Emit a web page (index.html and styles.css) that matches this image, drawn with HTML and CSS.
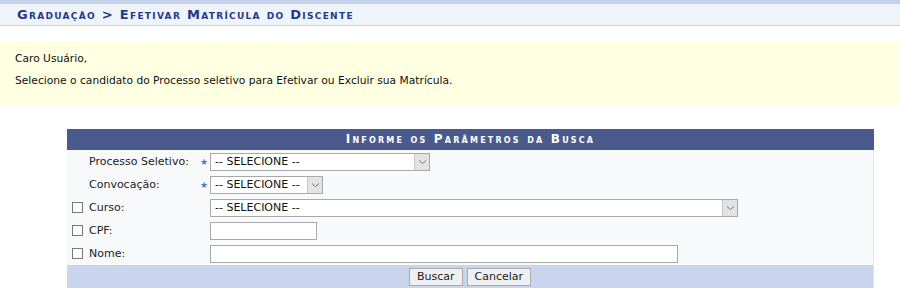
FILE: index.html
```html
<!DOCTYPE html>
<html lang="pt-BR">
<head>
<meta charset="utf-8">
<title>Efetivar Matrícula do Discente</title>
<link rel="stylesheet" href="styles.css">
</head>
<body>
<div class="topline"></div>
<h2 class="title">Graduação &gt; Efetivar Matrícula do Discente</h2>
<div class="info">
  <p>Caro Usuário,</p>
  <p>Selecione o candidato do Processo seletivo para Efetivar ou Excluir sua Matrícula.</p>
</div>
<form class="busca">
  <table class="formulario">
    <caption>Informe os Parâmetros da Busca</caption>
    <tbody>
      <tr>
        <td class="chk"></td>
        <th>Processo Seletivo:</th>
        <td class="req"><span class="star">★</span></td>
        <td><span class="sel w220"><span class="txt">-- SELECIONE --</span><span class="arrow"><svg width="9" height="6" viewBox="0 0 9 6"><path d="M1 1.5 L4.5 4.5 L8 1.5" fill="none" stroke="#777" stroke-width="1"/></svg></span></span></td>
      </tr>
      <tr>
        <td class="chk"></td>
        <th>Convocação:</th>
        <td class="req"><span class="star">★</span></td>
        <td><span class="sel w113"><span class="txt">-- SELECIONE --</span><span class="arrow"><svg width="9" height="6" viewBox="0 0 9 6"><path d="M1 1.5 L4.5 4.5 L8 1.5" fill="none" stroke="#777" stroke-width="1"/></svg></span></span></td>
      </tr>
      <tr>
        <td class="chk"><span class="box"></span></td>
        <th>Curso:</th>
        <td class="req"></td>
        <td><span class="sel w528"><span class="txt">-- SELECIONE --</span><span class="arrow"><svg width="9" height="6" viewBox="0 0 9 6"><path d="M1 1.5 L4.5 4.5 L8 1.5" fill="none" stroke="#777" stroke-width="1"/></svg></span></span></td>
      </tr>
      <tr>
        <td class="chk"><span class="box"></span></td>
        <th>CPF:</th>
        <td class="req"></td>
        <td><span class="inp w107"></span></td>
      </tr>
      <tr>
        <td class="chk"><span class="box"></span></td>
        <th>Nome:</th>
        <td class="req"></td>
        <td><span class="inp w468"></span></td>
      </tr>
    </tbody>
    <tfoot>
      <tr>
        <td colspan="4"><span class="btn">Buscar</span><span class="btn">Cancelar</span></td>
      </tr>
    </tfoot>
  </table>
</form>
</body>
</html>
```
FILE: styles.css
```css
* { box-sizing: border-box; }
body {
  margin: 0;
  font-family: "DejaVu Sans", Verdana, sans-serif;
  font-size: 11px;
  color: #222;
  background: #fff;
}
.topline {
  height: 4px;
  background: #c4d2eb;
}
.title {
  margin: 0;
  height: 22px;
  padding: 3px 0 0 17px;
  background: #eff3fa;
  border-bottom: 1px solid #c4d2eb;
  color: #1f3a8a;
  font-size: 13px;
  letter-spacing: 1.3px;
  font-weight: bold;
  font-variant: small-caps;
  line-height: 16px;
}
.info {
  margin-top: 15px;
  background: #ffffe1;
  padding: 7px 15px 13px;
  color: #111;
}
.info p {
  margin: 0;
  font-size: 10.7px;
  line-height: 22px;
}
.busca {
  margin: 24px 0 0 67px;
  width: 807px;
}
.formulario {
  width: 807px;
  border-collapse: collapse;
  background: #f8f9fb;
  border-right: 1px solid #e3e6ec;
}
.formulario caption {
  background: #4b5a8c;
  color: #fff;
  font-weight: bold;
  font-variant: small-caps;
  letter-spacing: 2.2px;
  font-size: 12px;
  height: 21px;
  line-height: 21px;
  text-align: center;
}
.formulario td, .formulario th {
  padding: 0;
  height: 23px;
  vertical-align: middle;
}
.formulario th {
  text-align: left;
  font-weight: normal;
  width: 111px;
}
.chk { width: 22px; padding-left: 5px !important; }
.req { width: 10px; }
.box {
  display: block;
  width: 11px;
  height: 11px;
  border: 1px solid #777;
  background: #fff;
}
.star {
  color: #4d79c7;
  font-size: 9px;
  display: inline-block;
}
.sel, .inp {
  display: inline-flex;
  align-items: center;
  height: 18px;
  border: 1px solid #a9a9a9;
  background: #fff;
  vertical-align: middle;
}
.sel .txt {
  flex: 1;
  padding-left: 4px;
  color: #111;
}
.sel .arrow {
  width: 15px;
  height: 16px;
  background: #e3e3e3;
  border-left: 1px solid #c8c8c8;
  display: flex;
  align-items: center;
  justify-content: center;
}
.w220 { width: 220px; }
.w113 { width: 113px; }
.w528 { width: 528px; }
.w107 { width: 107px; }
.w468 { width: 468px; }
.formulario tfoot td {
  background: #c8d5ec;
  text-align: center;
  height: 23px;
}
.btn {
  display: inline-block;
  height: 18px;
  line-height: 16px;
  padding: 0 7px;
  margin: 0 2px;
  border: 1px solid #aaa;
  background: #f0f0f0;
  color: #222;
}
```
